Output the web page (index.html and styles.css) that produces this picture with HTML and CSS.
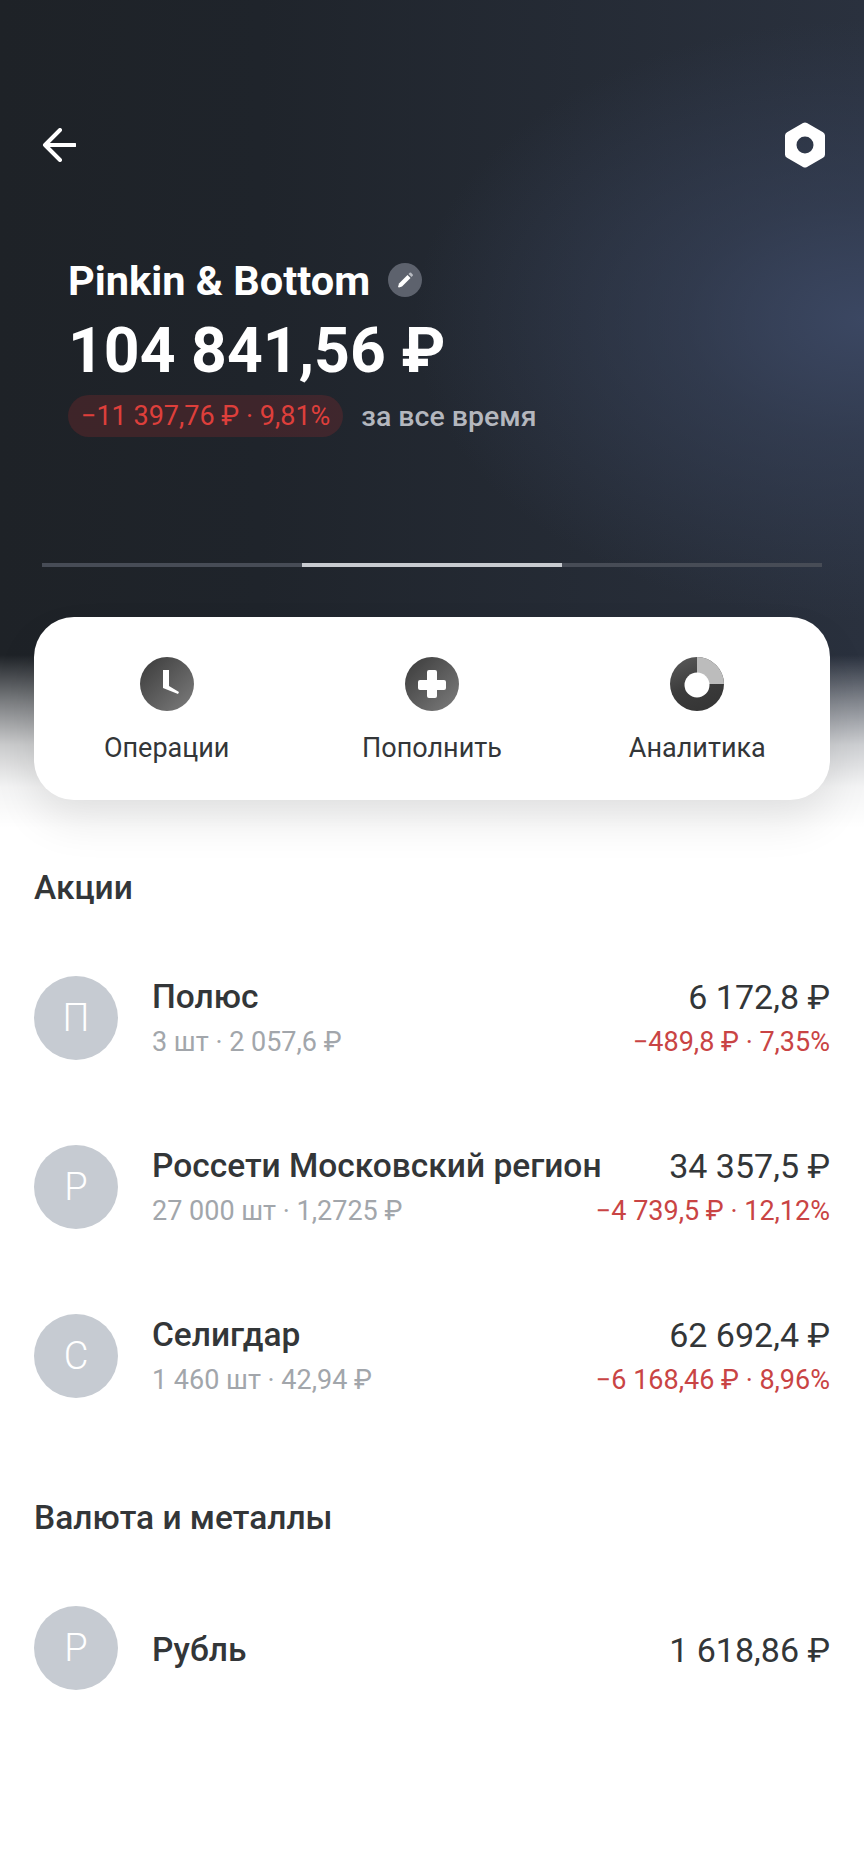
FILE: index.html
```html
<!DOCTYPE html>
<html lang="ru">
<head>
  <meta charset="UTF-8" />
  <meta name="viewport" content="width=device-width, initial-scale=1.0"/>
  <title>Pinkin &amp; Bottom</title>
  <link rel="stylesheet" href="styles.css">
</head>
<body>
  <div class="hero">
    <div class="top-bar">
      <svg class="back-icon" width="34" height="34" viewBox="0 0 34 34">
        <path d="M33 17H3M18 2 3 17l15 15" fill="none" stroke="#fff" stroke-width="4" stroke-linecap="round" stroke-linejoin="round"/>
      </svg>
      <svg class="nut-icon" width="40" height="46" viewBox="0 0 40 46">
        <path fill-rule="evenodd" fill="#fff" d="M18 1 2 10.2A4 4 0 0 0 0 13.700V32.300A4 4 0 0 0 2 35.800L18 45A4 4 0 0 0 22 45L38 35.800A4 4 0 0 0 40 32.300V13.700A4 4 0 0 0 38 10.200L22 1A4 4 0 0 0 18 1ZM20 14.500A8.500 8.500 0 1 1 20 31.500A8.500 8.500 0 1 1 20 14.500Z"/>
      </svg>
    </div>

    <div class="account">
      <div class="account-name">
        <span>Pinkin &amp; Bottom</span>
        <svg class="edit-icon" width="34" height="34" viewBox="0 0 34 34">
          <circle cx="17" cy="17" r="17" fill="#5d626d"/>
          <path d="M11 24.500 10 24l1-3.500 8.500-8.500 3 3L14 23.500Z" fill="#fff"/>
          <path d="M20.500 11l1.200-1.200a1 1 0 0 1 1.400 0l1.600 1.600a1 1 0 0 1 0 1.400L23.500 14Z" fill="#b9bcc3"/>
        </svg>
      </div>
      <div class="account-total">104 841,56 ₽</div>
      <div class="account-change">
        <span class="change-badge">−11 397,76 ₽ · 9,81%</span>
        <span class="change-period">за все время</span>
      </div>
    </div>

    <div class="pager">
      <div class="pager-part"></div>
      <div class="pager-part active"></div>
      <div class="pager-part"></div>
    </div>

    <div class="actions">
      <div class="action">
        <svg width="54" height="54" viewBox="0 0 54 54">
          <defs>
            <linearGradient id="iconFill" x1="0" y1="0" x2="1" y2="1">
              <stop offset="0" stop-color="#3a3a3a"/>
              <stop offset="1" stop-color="#7d7d7d"/>
            </linearGradient>
            <linearGradient id="donutFill" x1="0" y1="0" x2="0.4" y2="1">
              <stop offset="0" stop-color="#5c5c5c"/>
              <stop offset="0.6" stop-color="#3c3c3c"/>
              <stop offset="1" stop-color="#363636"/>
            </linearGradient>
          </defs>
          <circle cx="27" cy="27" r="27" fill="url(#iconFill)"/>
          <path d="M23 13h6v16l10 6-1 2-15-6Z" fill="#fff"/>
        </svg>
        <span>Операции</span>
      </div>
      <div class="action">
        <svg width="54" height="54" viewBox="0 0 54 54">
          <circle cx="27" cy="27" r="27" fill="url(#iconFill)"/>
          <path d="M22 15a2 2 0 0 1 2-2h6a2 2 0 0 1 2 2v8h7a2 2 0 0 1 2 2v6a2 2 0 0 1-2 2h-7v6a2 2 0 0 1-2 2h-6a2 2 0 0 1-2-2v-6h-7a2 2 0 0 1-2-2v-6a2 2 0 0 1 2-2h7Z" fill="#fff"/>
        </svg>
        <span>Пополнить</span>
      </div>
      <div class="action">
        <svg width="54" height="54" viewBox="0 0 54 54">
          <circle cx="27" cy="27" r="27" fill="url(#donutFill)"/>
          <path d="M27 0A27 27 0 0 1 54 27H27Z" fill="#bcbcbc"/>
          <circle cx="27" cy="28" r="12.500" fill="#fff"/>
        </svg>
        <span>Аналитика</span>
      </div>
    </div>
  </div>

  <div class="portfolio">
    <h2 class="section-title">Акции</h2>

    <div class="asset">
      <div class="avatar">П</div>
      <div class="asset-info">
        <div class="asset-name">Полюс</div>
        <div class="asset-sub">3 шт · 2 057,6 ₽</div>
      </div>
      <div class="asset-values">
        <div class="asset-price">6 172,8 ₽</div>
        <div class="asset-change">−489,8 ₽ · 7,35%</div>
      </div>
    </div>

    <div class="asset">
      <div class="avatar">Р</div>
      <div class="asset-info">
        <div class="asset-name">Россети Московский регион</div>
        <div class="asset-sub">27 000 шт · 1,2725 ₽</div>
      </div>
      <div class="asset-values">
        <div class="asset-price">34 357,5 ₽</div>
        <div class="asset-change">−4 739,5 ₽ · 12,12%</div>
      </div>
    </div>

    <div class="asset">
      <div class="avatar">С</div>
      <div class="asset-info">
        <div class="asset-name">Селигдар</div>
        <div class="asset-sub">1 460 шт · 42,94 ₽</div>
      </div>
      <div class="asset-values">
        <div class="asset-price">62 692,4 ₽</div>
        <div class="asset-change">−6 168,46 ₽ · 8,96%</div>
      </div>
    </div>

    <h2 class="section-title metals">Валюта и металлы</h2>

    <div class="asset">
      <div class="avatar">Р</div>
      <div class="asset-info">
        <div class="asset-name">Рубль</div>
      </div>
      <div class="asset-values">
        <div class="asset-price">1 618,86 ₽</div>
      </div>
    </div>
  </div>
</body>
</html>
```

FILE: styles.css
```css
html, body {
  margin: 0;
  height: 100%;
}

body {
  background-color: white;
  color: #333638;
  font-family: Roboto, "Noto Sans", sans-serif;
  overflow: hidden;
}

.hero {
  height: 830px;
  padding: 122px 34px 0;
  box-sizing: border-box;
  background:
    linear-gradient(to bottom,
      rgba(255,255,255,0) 655px,
      rgba(255,255,255,0.42) 702px,
      rgba(255,255,255,0.77) 745px,
      rgba(255,255,255,0.95) 787px,
      #fff 828px),
    radial-gradient(ellipse 450px 300px at 100% 320px, #3b4762 0, rgba(59,71,98,0.5) 40%, rgba(59,71,98,0) 100%),
    linear-gradient(to right, #1e2227 0, #1f242b 30%, #2a313e 100%);
}

.top-bar {
  display: flex;
  justify-content: space-between;
  align-items: center;
  height: 46px;
  padding: 0 5px 0 8px;
}

.account {
  margin-top: 89px;
  padding-left: 34px;
}

.account-name {
  display: flex;
  align-items: center;
  gap: 18px;
  height: 46px;
  font-size: 41.500px;
  font-weight: 700;
  color: white;
}

.account-total {
  margin-top: 12px;
  font-size: 62.500px;
  line-height: 72px;
  font-weight: 700;
  color: white;
}

.account-change {
  display: flex;
  align-items: center;
  gap: 18px;
  margin-top: 8px;
  font-size: 27px;
}

.change-badge {
  height: 42px;
  line-height: 42px;
  padding: 0 13px;
  border-radius: 21px;
  background-color: rgba(190, 45, 45, 0.2);
  color: #de3f3b;
}

.change-period {
  color: #b4b7be;
  font-size: 28.500px;
  font-weight: 500;
}

.pager {
  display: flex;
  margin: 126px 8px 0;
}

.pager-part {
  flex: 1;
  height: 4px;
  background-color: #474c56;
}

.pager-part.active {
  background-color: #c8cbd0;
}

.actions {
  display: grid;
  grid-template-columns: 1fr 1fr 1fr;
  height: 183px;
  box-sizing: border-box;
  margin-top: 50px;
  padding: 40px 0 0;
  border-radius: 40px;
  background-color: white;
  box-shadow: 0 22px 44px rgba(0, 0, 0, 0.09);
}

.action {
  display: flex;
  flex-direction: column;
  align-items: center;
  gap: 22px;
  font-size: 27px;
  line-height: 30px;
}

.portfolio {
  padding: 35px 34px 0;
}

.section-title {
  margin: 0 0 65px;
  font-size: 33.500px;
  line-height: 46px;
  font-weight: 500;
}

.section-title.metals {
  margin-top: 97px;
}

.asset {
  display: flex;
  align-items: center;
  height: 84px;
  margin-bottom: 85px;
}

.avatar {
  flex: none;
  width: 84px;
  height: 84px;
  margin-right: 34px;
  border-radius: 50%;
  background-color: #c6cbd2;
  color: white;
  font-size: 38px;
  font-weight: 300;
  line-height: 84px;
  text-align: center;
}

.asset-info {
  flex: 1;
  min-width: 0;
  padding-top: 3px;
}

.asset-values {
  padding-top: 3px;
  text-align: right;
  white-space: nowrap;
}

.asset-name {
  font-size: 33.500px;
  line-height: 40px;
  font-weight: 500;
  white-space: nowrap;
}

.asset-price {
  font-size: 34px;
  line-height: 40px;
}

.asset-sub, .asset-change {
  margin-top: 5px;
  font-size: 27px;
  line-height: 40px;
}

.asset-sub {
  color: #a2a6ab;
}

.asset-change {
  color: #c94444;
}
```
